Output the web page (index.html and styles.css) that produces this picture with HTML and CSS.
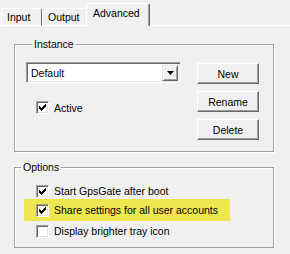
FILE: index.html
```html
<!DOCTYPE html>
<html lang="en">
<head>
  <meta charset="UTF-8" />
  <title>Advanced settings</title>
  <link rel="stylesheet" href="styles.css">
</head>
<body>
  <div class="tabs">
    <div class="tab-gap"></div>
    <div class="tab tab-input">Input</div>
    <div class="tab tab-output">Output</div>
    <div class="tab active">Advanced</div>
    <div class="tab-fill"></div>
  </div>

  <div class="page">
    <fieldset class="group instance">
      <legend>Instance</legend>
      <div class="instance-row">
        <div class="instance-left">
          <div class="combo">
            <span class="combo-text">Default</span>
            <span class="combo-btn">
              <svg width="7" height="4" viewBox="0 0 7 4"><polygon points="0,0 7,0 3.5,4" fill="#000"/></svg>
            </span>
          </div>
          <label class="check active-check">
            <span class="box checked">
              <svg width="7" height="7" viewBox="0 0 7 7" shape-rendering="crispEdges"><path d="M6 0h1v3h-1zM5 1h1v3h-1zM4 2h1v3h-1zM3 3h1v3h-1zM2 4h1v3h-1zM1 3h1v3h-1zM0 2h1v3h-1z" fill="#000"/></svg>
            </span>
            Active
          </label>
        </div>
        <div class="buttons">
          <button>New</button>
          <button>Rename</button>
          <button>Delete</button>
        </div>
      </div>
    </fieldset>

    <fieldset class="group options">
      <legend>Options</legend>
      <label class="check row">
        <span class="box checked">
          <svg width="7" height="7" viewBox="0 0 7 7" shape-rendering="crispEdges"><path d="M6 0h1v3h-1zM5 1h1v3h-1zM4 2h1v3h-1zM3 3h1v3h-1zM2 4h1v3h-1zM1 3h1v3h-1zM0 2h1v3h-1z" fill="#000"/></svg>
        </span>
        Start GpsGate after boot
      </label>
      <label class="check row highlight">
        <span class="box checked">
          <svg width="7" height="7" viewBox="0 0 7 7" shape-rendering="crispEdges"><path d="M6 0h1v3h-1zM5 1h1v3h-1zM4 2h1v3h-1zM3 3h1v3h-1zM2 4h1v3h-1zM1 3h1v3h-1zM0 2h1v3h-1z" fill="#000"/></svg>
        </span>
        Share settings for all user accounts
      </label>
      <label class="check row">
        <span class="box"></span>
        Display brighter tray icon
      </label>
    </fieldset>
  </div>
</body>
</html>
```

FILE: styles.css
```css
body {
  margin: 0;
  background: #f0f0f0;
  font-family: "Liberation Sans", Arial, sans-serif;
  font-size: 10.5px;
  color: #000;
}

/* tab strip */
.tabs {
  display: flex;
  align-items: flex-end;
  height: 26px;
}

.tab-gap {
  width: 1px;
  height: 1px;
  background: #fff;
}

.tab {
  box-sizing: border-box;
  height: 18px;
  padding-left: 5px;
  line-height: 16px;
  border-top: 1px solid #fff;
  border-left: 1px solid #fff;
  border-right: 1px solid #696969;
  border-bottom: 1px solid #fff;
  border-radius: 2px 2px 0 0;
}

.tab-input {
  width: 41px;
}

.tab-output {
  width: 44px;
  border-right: none;
}

.tab.active {
  width: 64px;
  height: 23px;
  padding-left: 6px;
  line-height: 19px;
  border-bottom: none;
  box-shadow: inset -1px 0 0 #a0a0a0;
}

.tab-fill {
  flex: 1;
  height: 1px;
  background: #fff;
}

/* group boxes */
.group {
  margin: 12px 16px 0 14px;
  padding: 11px 0 11px 11px;
  border: 1px solid #a0a0a0;
  box-shadow: inset 1px 1px 0 #fff, 1px 1px 0 #fff;
}

.group legend {
  margin-left: 6px;
  padding: 0 2px;
  line-height: 13px;
}

.options {
  margin-top: 9px;
  padding: 7px 0 6px 0;
}

.instance-row {
  display: flex;
  align-items: flex-start;
}

.instance-left {
  width: 155px;
}

/* combo box */
.combo {
  box-sizing: border-box;
  height: 21px;
  display: flex;
  align-items: center;
  background: #fff;
  border-top: 1px solid #a0a0a0;
  border-left: 1px solid #a0a0a0;
  border-right: 1px solid #fff;
  border-bottom: 1px solid #fff;
  box-shadow: inset 1px 1px 0 #696969, inset -1px -1px 0 #e3e3e3;
  padding: 2px;
}

.combo-text {
  flex: 1;
  padding-left: 2px;
}

.combo-btn {
  box-sizing: border-box;
  width: 16px;
  height: 16px;
  display: flex;
  align-items: center;
  justify-content: center;
  background: #f0f0f0;
  border-top: 1px solid #e3e3e3;
  border-left: 1px solid #e3e3e3;
  border-right: 1px solid #696969;
  border-bottom: 1px solid #696969;
  box-shadow: inset 1px 1px 0 #fff, inset -1px -1px 0 #a0a0a0;
}

/* check boxes */
.check {
  display: flex;
  align-items: center;
  gap: 5px;
}

.box {
  box-sizing: border-box;
  width: 13px;
  height: 13px;
  display: flex;
  align-items: center;
  justify-content: center;
  background: #fff;
  border-top: 1px solid #a0a0a0;
  border-left: 1px solid #a0a0a0;
  border-right: 1px solid #fff;
  border-bottom: 1px solid #fff;
  box-shadow: inset 1px 1px 0 #696969, inset -1px -1px 0 #e3e3e3;
}

.active-check {
  margin: 18px 0 0 10px;
}

.row {
  height: 20px;
  padding-left: 21px;
}

.row.highlight {
  width: 206px;
  height: 22px;
  margin: -2px 0 0 9px;
  padding-left: 12px;
  box-sizing: border-box;
  background: #efe74f;
}

.row.highlight .box {
  background: #fdfbdc;
}

/* buttons */
.buttons {
  display: flex;
  flex-direction: column;
  gap: 7px;
  margin: 1px 0 0 16px;
}

button {
  box-sizing: border-box;
  width: 62px;
  height: 21px;
  padding: 0;
  font: inherit;
  color: #000;
  background: #f0f0f0;
  border-top: 1px solid #fff;
  border-left: 1px solid #fff;
  border-right: 1px solid #696969;
  border-bottom: 1px solid #696969;
  box-shadow: inset -1px -1px 0 #a0a0a0;
}
```
